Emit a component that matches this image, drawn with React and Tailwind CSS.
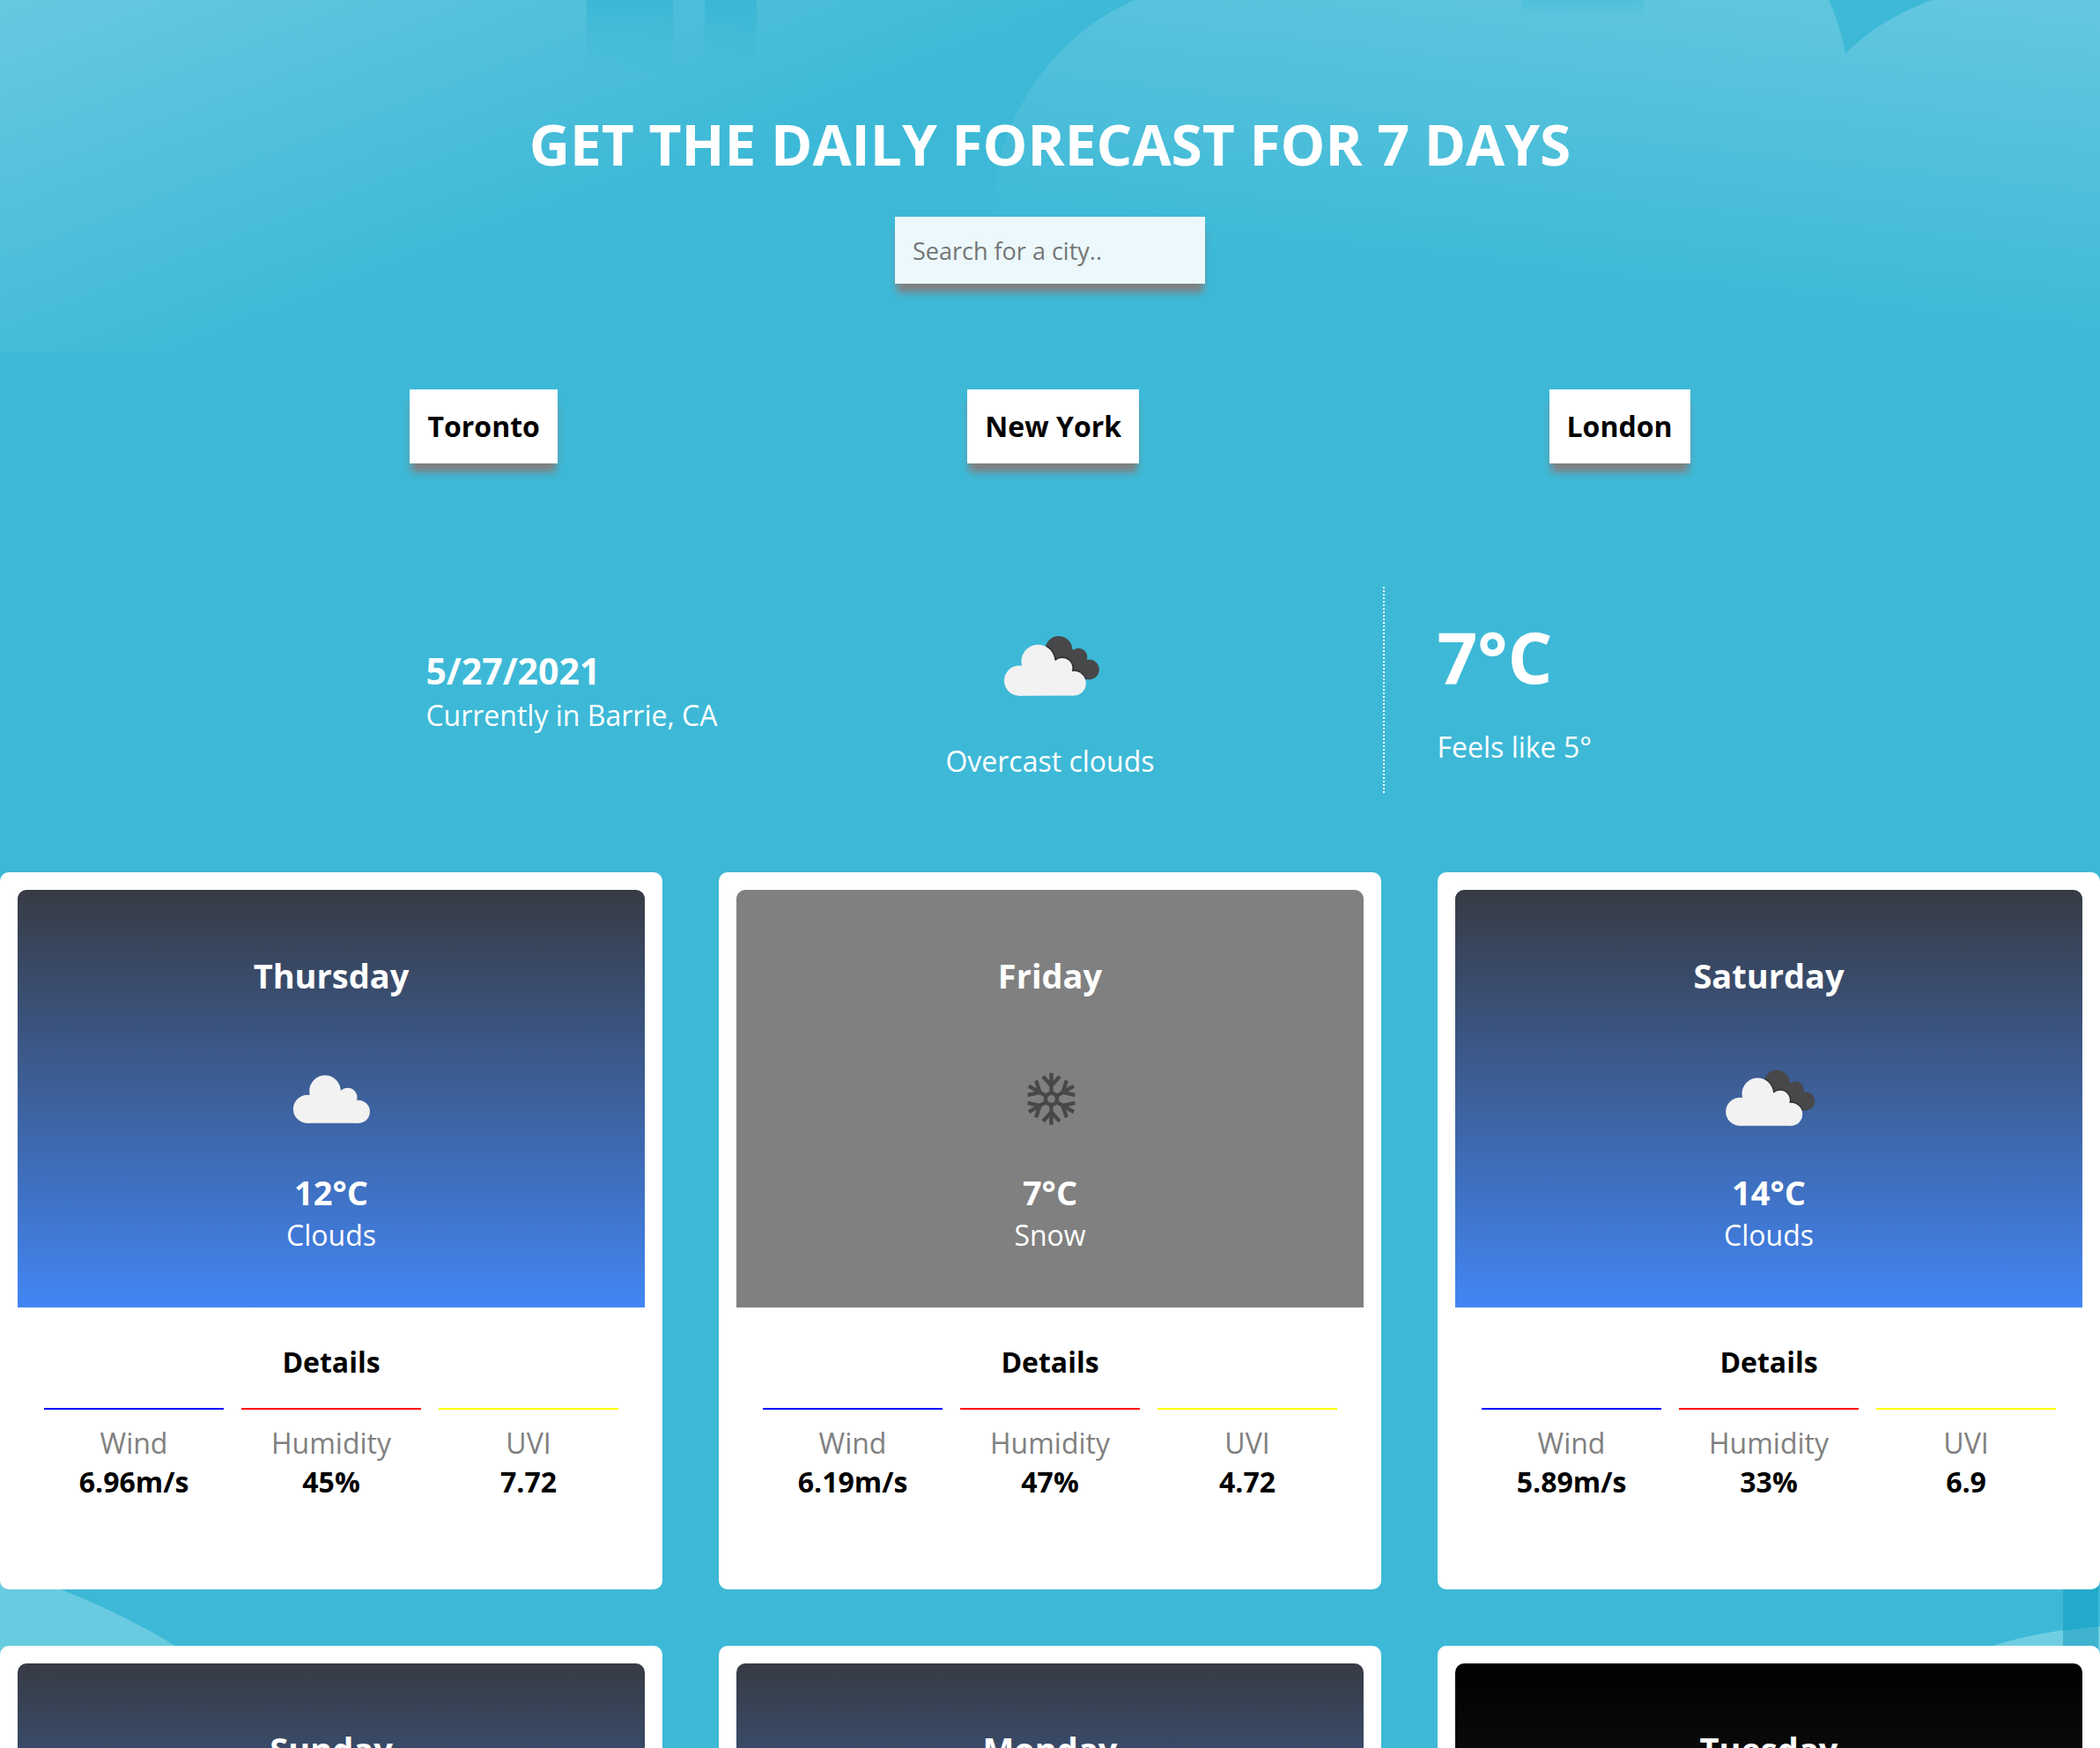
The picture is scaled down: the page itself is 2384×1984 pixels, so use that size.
function FrontCloud() {
  return (
    <g fill="#f2f2f2">
      <circle cx="62.3" cy="66.3" r="17.8" />
      <circle cx="42.2" cy="86.8" r="16" />
      <circle cx="88" cy="73.6" r="10.8" />
      <circle cx="100.2" cy="89.7" r="13" />
      <path d="M42 102.8L45 69L80 65L99 77L100.5 102.7Z" />
    </g>
  );
}

function Clouds() {
  return (
    <svg viewBox="0 0 150 150" className="h-full w-full" role="img" aria-label="Cloud">
      <g transform="translate(5.7 -3)">
        <FrontCloud />
      </g>
    </svg>
  );
}

function BrokenClouds() {
  return (
    <svg viewBox="0 0 150 150" className="h-full w-full" role="img" aria-label="Overcast">
      <defs>
        <clipPath id="rear-cloud">
          <circle cx="84.3" cy="53.7" r="14.3" />
          <circle cx="105.5" cy="61.5" r="9.2" />
          <circle cx="116.7" cy="75" r="10.7" />
          <path d="M74 62L98 52L112 68L118 85.7L100 84Z" />
        </clipPath>
      </defs>
      <g clipPath="url(#rear-cloud)">
        <path d="M60 30H140V110H60Z" fill="#48484a" />
        <g fill="#262628" fillOpacity="0.6">
          <circle cx="62.3" cy="66.3" r="19.4" />
          <circle cx="88" cy="73.6" r="12.4" />
          <circle cx="100.2" cy="89.7" r="14.6" />
        </g>
      </g>
      <FrontCloud />
    </svg>
  );
}

function Snow() {
  return (
    <svg viewBox="0 0 150 150" className="h-full w-full" role="img" aria-label="Snowflake">
      <g transform="translate(76.5 72.3)" fill="none" stroke="#48484a" strokeWidth="4.4">
        {[0, 60, 120, 180, 240, 300].map((angle) => (
          <path key={angle} transform={`rotate(${angle})`} d="M0 -6V-29.5M-9.5 -25.5L0 -15L9.5 -25.5" />
        ))}
        <circle r="6.6" />
      </g>
    </svg>
  );
}

const skies = {
  clouds: "bg-linear-to-b/srgb from-[#373b44] to-[#4286f4]",
  snow: "bg-[#808080]",
  rain: "bg-linear-to-b/srgb from-black to-[#303030]",
};

const days = [
  { day: "Thursday", sky: "clouds", Icon: Clouds, temp: "12°C", label: "Clouds", wind: "6.96m/s", humidity: "45%", uvi: "7.72" },
  { day: "Friday", sky: "snow", Icon: Snow, temp: "7°C", label: "Snow", wind: "6.19m/s", humidity: "47%", uvi: "4.72" },
  { day: "Saturday", sky: "clouds", Icon: BrokenClouds, temp: "14°C", label: "Clouds", wind: "5.89m/s", humidity: "33%", uvi: "6.9" },
  { day: "Sunday", sky: "clouds" },
  { day: "Monday", sky: "clouds" },
  { day: "Tuesday", sky: "rain" },
];

function Stat({ name, value, line }) {
  return (
    <div className={`flex-1 border-t-2 pt-4 text-center ${line}`}>
      <dt className="text-[#808080]">{name}</dt>
      <dd className="font-bold">{value}</dd>
    </div>
  );
}

function DayCard({ day, sky, Icon, temp, label, wind, humidity, uvi }) {
  return (
    <article className="rounded-[10px] bg-white px-5 pt-5 pb-[100px] text-black">
      <div className={`min-h-[474px] rounded-t-[10px] pt-[71px] pb-[60px] text-center text-white ${skies[sky]}`}>
        <h2 className="text-[38px] leading-[52px] font-bold">{day}</h2>
        {Icon && (
          <>
            <div className="mx-auto mt-[42px] mb-[2px] size-[150px]">
              <Icon />
            </div>
            <p className="text-[38px] leading-[53px] font-bold">{temp}</p>
            <p>{label}</p>
          </>
        )}
      </div>
      {Icon && (
        <>
          <h3 className="mt-10 text-center font-bold">Details</h3>
          <dl className="mt-[30px] flex gap-5 px-[30px]">
            <Stat name="Wind" value={wind} line="border-[#0000ff]" />
            <Stat name="Humidity" value={humidity} line="border-[#ff0000]" />
            <Stat name="UVI" value={uvi} line="border-[#ffff00]" />
          </dl>
        </>
      )}
    </article>
  );
}

function Backdrop() {
  return (
    <svg
      viewBox="0 0 2384 1984"
      preserveAspectRatio="xMidYMin slice"
      className="absolute inset-0 -z-10 h-full w-full"
      aria-hidden="true"
    >
      <defs>
        <linearGradient id="glow" gradientUnits="userSpaceOnUse" x1="0" y1="0" x2="170" y2="440">
          <stop offset="0" stopColor="#fff" stopOpacity="0.22" />
          <stop offset="1" stopColor="#fff" stopOpacity="0" />
        </linearGradient>
        <linearGradient id="cloud" gradientUnits="userSpaceOnUse" x1="33" y1="-296" x2="-15" y2="135">
          <stop offset="0" stopColor="#fff" stopOpacity="0.22" />
          <stop offset="1" stopColor="#fff" stopOpacity="0" />
        </linearGradient>
        <linearGradient id="tower" gradientUnits="userSpaceOnUse" x1="0" y1="0" x2="0" y2="92">
          <stop offset="0" stopColor="#2fb1d3" stopOpacity="0.6" />
          <stop offset="1" stopColor="#3db9d7" stopOpacity="0" />
        </linearGradient>
        <linearGradient id="stub" gradientUnits="userSpaceOnUse" x1="0" y1="0" x2="0" y2="18">
          <stop offset="0" stopColor="#3db9d7" stopOpacity="0.45" />
          <stop offset="1" stopColor="#3db9d7" stopOpacity="0" />
        </linearGradient>
      </defs>
      <path d="M0 0H1400V400H0Z" fill="url(#glow)" />
      <path d="M666 0H764V80H666ZM800 0H859V90H800Z" fill="url(#tower)" />
      <path
        d="M1126 400V250A274 274 0 0 1 1288 0H2076Q2089 28 2095 61Q2130 24 2193 0H2384V400Z"
        fill="url(#cloud)"
      />
      <path d="M1728 0H1866V18H1728Z" fill="url(#stub)" />
      <path d="M0 1780Q40 1790 69 1804Q140 1832 199 1868V1984H0Z" fill="#68cbe0" />
      <path d="M2262 1868Q2320 1850 2384 1846V1984H2262Z" fill="#70cee2" />
      <path d="M2342 1780H2382V1984H2342Z" fill="#22a9cb" />
      <path d="M2342 1851Q2362 1848 2382 1846V1984H2342Z" fill="#3fb3d0" />
    </svg>
  );
}

const shadow = "shadow-[0_12px_8px_-2px_#808080]";

export default function App() {
  return (
    <div className="relative isolate h-screen overflow-hidden bg-[#3db9d7] font-['Open_Sans',sans-serif] text-[32px] leading-[44px] text-white">
      <Backdrop />
      <header className="flex flex-col items-center pt-[120px]">
        <h1 className="text-center text-[64px] leading-[88px] font-bold">GET THE DAILY FORECAST FOR 7 DAYS</h1>
        <input
          type="text"
          aria-label="Search for a city"
          placeholder="Search for a city.."
          className={`mt-[38px] h-[76px] w-[352px] bg-white/90 px-5 text-[27px] text-black placeholder:text-[#757575] placeholder:opacity-100 ${shadow}`}
        />
      </header>
      <nav className="mt-[120px] flex justify-evenly">
        {["Toronto", "New York", "London"].map((city) => (
          <button key={city} type="button" className={`bg-white p-5 font-bold text-black ${shadow}`}>
            {city}
          </button>
        ))}
      </nav>
      <section className="mx-auto mt-[140px] grid w-fit grid-cols-[1fr_auto_1fr] items-center gap-x-[259px]">
        <div>
          <p className="text-[41px] leading-[57px] font-bold">5/27/2021</p>
          <p>Currently in Barrie, CA</p>
        </div>
        <div className="flex flex-col items-center gap-0.5">
          <div className="size-[160px]">
            <BrokenClouds />
          </div>
          <p>Overcast clouds</p>
        </div>
        <div className="border-l-2 border-dotted border-white pt-6 pb-[30px] pl-[60px]">
          <p className="text-[80px] leading-[109px] font-bold">7°C</p>
          <p className="mt-[27px]">Feels like 5°</p>
        </div>
      </section>
      <main className="mt-[90px] grid grid-cols-3 gap-16">
        {days.map((entry) => (
          <DayCard key={entry.day} {...entry} />
        ))}
      </main>
    </div>
  );
}
